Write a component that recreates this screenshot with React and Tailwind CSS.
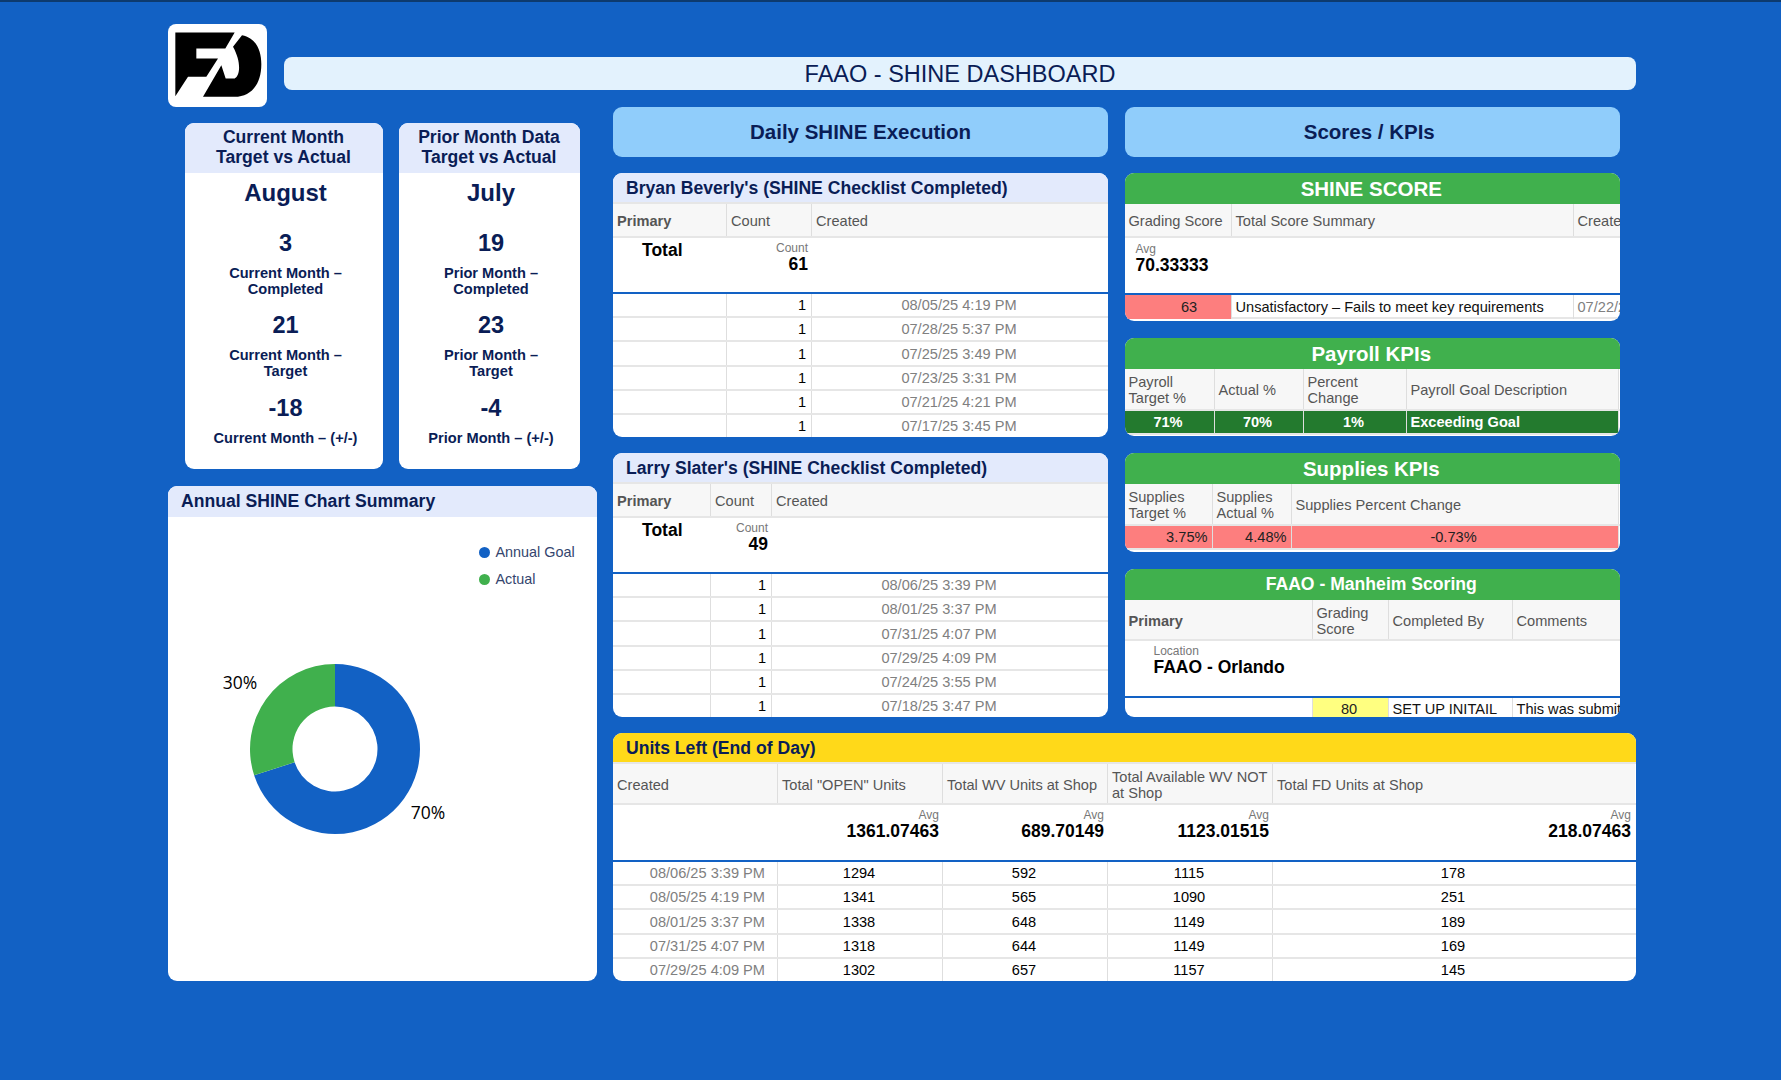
const bryanRows = ['08/05/25 4:19 PM', '07/28/25 5:37 PM', '07/25/25 3:49 PM', '07/23/25 3:31 PM', '07/21/25 4:21 PM', '07/17/25 3:45 PM'];
const larryRows = ['08/06/25 3:39 PM', '08/01/25 3:37 PM', '07/31/25 4:07 PM', '07/29/25 4:09 PM', '07/24/25 3:55 PM', '07/18/25 3:47 PM'];
const unitRows = [
  ['08/06/25 3:39 PM', 1294, 592, 1115, 178],
  ['08/05/25 4:19 PM', 1341, 565, 1090, 251],
  ['08/01/25 3:37 PM', 1338, 648, 1149, 189],
  ['07/31/25 4:07 PM', 1318, 644, 1149, 169],
  ['07/29/25 4:09 PM', 1302, 657, 1157, 145],
];
const unitAvgs = ['1361.07463', '689.70149', '1123.01515', '218.07463'];

function HeadCell({ children, bold, last }) {
  return (
    <div className={`flex items-center overflow-hidden bg-[#f7f7f7] pl-[4px] pr-[2px] pt-[2px] leading-[16px] text-[#555555] ${bold ? 'font-bold' : ''} ${last ? '' : 'border-r border-[#dedede]'}`}>
      <span>{children}</span>
    </div>
  );
}

function Cell({ children, className = '', last }) {
  return (
    <div className={`flex h-full items-center overflow-hidden whitespace-nowrap pl-[4px] pt-[2px] ${last ? '' : 'border-r border-[#dedede]'} ${className}`}>
      {children}
    </div>
  );
}

function Summary({ label, value, right, className = '' }) {
  return (
    <div className={`flex flex-col pt-[4px] ${right ? 'items-end pr-[4px]' : ''} ${className}`}>
      <span className="text-[12px] leading-[12px] text-[#777777]">{label}</span>
      <span className="text-[17.5px] font-bold leading-[20px] text-black">{value}</span>
    </div>
  );
}

function Checklist({ title, cols, total, rows }) {
  return (
    <section className="h-[264px] shrink-0 overflow-hidden rounded-[9px] bg-white">
      <h3 className="h-[31px] border-b-2 border-[#e6e6e6] bg-[#e3eafc] pl-[13px] text-[17.6px] font-bold leading-[30px] text-[#0a1d56]">{title}</h3>
      <div className={`grid h-[34px] border-b-2 border-[#e6e6e6] ${cols}`}>
        <HeadCell bold>Primary</HeadCell>
        <HeadCell>Count</HeadCell>
        <HeadCell last>Created</HeadCell>
      </div>
      <div className={`grid h-[56px] border-b-2 border-[#1261c4] ${cols}`}>
        <div className="pl-[29px] text-[17.5px] font-bold leading-[24px] text-black">Total</div>
        <Summary right label="Count" value={total} />
      </div>
      {rows.map((date) => (
        <div key={date} className={`grid h-[24.2px] border-b-2 border-[#e6e6e6] ${cols}`}>
          <Cell />
          <Cell className="justify-end pr-[5px] text-black">1</Cell>
          <Cell last className="justify-center pr-[6px] text-[#808080]">{date}</Cell>
        </div>
      ))}
    </section>
  );
}

function GreenTitle({ children, size }) {
  return (
    <h3 className={`h-[31px] bg-[#40b04d] pr-[2px] text-center font-bold leading-[31px] text-white ${size}`}>{children}</h3>
  );
}

function ShineScore() {
  const cols = 'grid-cols-[107px_342px_100px]';
  return (
    <section className="h-[148px] shrink-0 overflow-hidden rounded-[9px] bg-white">
      <GreenTitle size="text-[20.5px]">SHINE SCORE</GreenTitle>
      <div className={`grid h-[34px] border-b-2 border-[#e6e6e6] ${cols}`}>
        <HeadCell>Grading Score</HeadCell>
        <HeadCell>Total Score Summary</HeadCell>
        <HeadCell last>Created</HeadCell>
      </div>
      <div className="h-[57px] border-b-2 border-[#1261c4] pl-[11px] pt-[1px]">
        <Summary label="Avg" value="70.33333" />
      </div>
      <div className={`grid h-[24px] border-b-2 border-[#e6e6e6] ${cols}`}>
        <div className="flex h-full items-center justify-center border-r border-[#dedede] bg-[#fd7e7e] pl-[23px] pt-[2px] text-[#222222]">63</div>
        <Cell className="text-[#111111]">Unsatisfactory – Fails to meet key requirements</Cell>
        <Cell last className="text-[#808080]">07/22/25 3:12 PM</Cell>
      </div>
    </section>
  );
}

function PayrollKpis() {
  const cols = 'grid-cols-[90px_89px_103px_212px]';
  return (
    <section className="h-[98px] shrink-0 overflow-hidden rounded-[9px] bg-white">
      <GreenTitle size="text-[20.5px]">Payroll KPIs</GreenTitle>
      <div className={`grid h-[42px] border-b-2 border-[#e6e6e6] ${cols}`}>
        <HeadCell>Payroll Target %</HeadCell>
        <HeadCell>Actual %</HeadCell>
        <HeadCell>Percent Change</HeadCell>
        <HeadCell>Payroll Goal Description</HeadCell>
      </div>
      <div className={`grid h-[24px] border-b-2 border-[#e6e6e6] font-bold text-white ${cols}`}>
        <Cell className="justify-center bg-[#237a2e] pr-[6px]">71%</Cell>
        <Cell className="justify-center bg-[#237a2e] pr-[6px]">70%</Cell>
        <Cell className="justify-center bg-[#237a2e] pr-[6px]">1%</Cell>
        <Cell className="bg-[#237a2e]">Exceeding Goal</Cell>
      </div>
    </section>
  );
}

function SuppliesKpis() {
  const cols = 'grid-cols-[88px_79px_327px]';
  return (
    <section className="h-[99px] shrink-0 overflow-hidden rounded-[9px] bg-white">
      <GreenTitle size="text-[20.5px]">Supplies KPIs</GreenTitle>
      <div className={`grid h-[42px] border-b-2 border-[#e6e6e6] ${cols}`}>
        <HeadCell>Supplies Target %</HeadCell>
        <HeadCell>Supplies Actual %</HeadCell>
        <HeadCell>Supplies Percent Change</HeadCell>
      </div>
      <div className={`grid h-[24px] border-b-2 border-[#e6e6e6] text-[#222222] ${cols}`}>
        <Cell className="justify-end bg-[#fd7e7e] pr-[4px]">3.75%</Cell>
        <Cell className="justify-end bg-[#fd7e7e] pr-[4px]">4.48%</Cell>
        <Cell className="justify-center bg-[#fd7e7e] pr-[6px]">-0.73%</Cell>
      </div>
    </section>
  );
}

function ManheimScoring() {
  const cols = 'grid-cols-[188px_76px_124px_200px]';
  return (
    <section className="h-[148px] shrink-0 overflow-hidden rounded-[9px] bg-white">
      <GreenTitle size="text-[17.6px]">FAAO - Manheim Scoring</GreenTitle>
      <div className={`grid h-[41px] border-b-2 border-[#e6e6e6] ${cols}`}>
        <HeadCell bold>Primary</HeadCell>
        <HeadCell>Grading Score</HeadCell>
        <HeadCell>Completed By</HeadCell>
        <HeadCell last>Comments</HeadCell>
      </div>
      <div className="h-[57px] border-b-2 border-[#1261c4] pl-[29px]">
        <Summary label="Location" value="FAAO - Orlando" />
      </div>
      <div className={`grid h-[22px] ${cols}`}>
        <Cell />
        <Cell className="justify-center bg-[#ffff80] pr-[6px] text-[#222222]">80</Cell>
        <Cell className="text-[#111111]">SET UP INITAIL</Cell>
        <Cell last className="text-[#111111]">This was submitted during setup</Cell>
      </div>
    </section>
  );
}

function UnitsLeft() {
  const cols = 'grid-cols-[165px_165px_165px_165px_362px]';
  return (
    <section className="h-[248px] overflow-hidden rounded-[9px] bg-white">
      <h3 className="h-[31px] border-b-2 border-[#e6e6e6] bg-[#ffd919] pl-[13px] text-[17.6px] font-bold leading-[30px] text-[#0a1d56]">Units Left (End of Day)</h3>
      <div className={`grid h-[41px] border-b-2 border-[#e6e6e6] ${cols}`}>
        <HeadCell>Created</HeadCell>
        <HeadCell>Total "OPEN" Units</HeadCell>
        <HeadCell>Total WV Units at Shop</HeadCell>
        <HeadCell>Total Available WV NOT at Shop</HeadCell>
        <HeadCell last>Total FD Units at Shop</HeadCell>
      </div>
      <div className={`grid h-[57px] border-b-2 border-[#1261c4] ${cols}`}>
        <div />
        {unitAvgs.map((avg) => (
          <Summary key={avg} right label="Avg" value={avg} />
        ))}
      </div>
      {unitRows.map((row) => (
        <div key={row[0]} className={`grid h-[24.2px] border-b-2 border-[#e6e6e6] ${cols}`}>
          <Cell className="justify-end pr-[12px] text-[#808080]">{row[0]}</Cell>
          <Cell className="justify-center pr-[6px] text-black">{row[1]}</Cell>
          <Cell className="justify-center pr-[6px] text-black">{row[2]}</Cell>
          <Cell className="justify-center pr-[6px] text-black">{row[3]}</Cell>
          <Cell last className="justify-center pr-[6px] text-black">{row[4]}</Cell>
        </div>
      ))}
    </section>
  );
}

function MonthCard({ title, month, stats, width }) {
  return (
    <section className={`h-[346px] shrink-0 overflow-hidden rounded-[9px] bg-white text-center text-[#0a1d56] ${width}`}>
      <h3 className="h-[50px] bg-[#e3eafc] pr-[1px] pt-[3.5px] text-[17.6px] font-bold leading-[20px]">
        {title[0]}
        <br />
        {title[1]}
      </h3>
      <div className="pl-[3px]">
        <p className="pt-[4px] text-[24px] font-bold leading-[32px]">{month}</p>
        {stats.map((stat) => (
          <div key={stat.value} className="h-[82.4px] pt-[20px]">
            <p className="text-[23.5px] font-bold leading-[28px]">{stat.value}</p>
            <p className="mt-[8px] whitespace-pre-line text-[14.6px] font-bold leading-[16px]">{stat.label}</p>
          </div>
        ))}
      </div>
    </section>
  );
}

function Donut() {
  return (
    <svg width="260" height="200" viewBox="0 0 260 200" className="ml-[47px] mt-[62px]">
      <path fill="#1261c4" d="M120 15 A85 85 0 1 1 39.16 126.27 L79.58 113.13 A42.5 42.5 0 1 0 120 57.5 Z" />
      <path fill="#40b04d" d="M39.16 126.27 A85 85 0 0 1 120 15 L120 57.5 A42.5 42.5 0 0 0 79.58 113.13 Z" />
      <text x="25" y="40" textAnchor="middle" fontSize="17.5" fill="#000000" fontFamily="Open Sans, sans-serif">30%</text>
      <text x="213" y="170" textAnchor="middle" fontSize="17.5" fill="#000000" fontFamily="Open Sans, sans-serif">70%</text>
    </svg>
  );
}

function ChartCard() {
  return (
    <section className="mt-[17px] h-[495px] overflow-hidden rounded-[9px] bg-white">
      <h3 className="h-[31px] bg-[#e3eafc] pl-[13px] text-[17.6px] font-bold leading-[30px] text-[#0a1d56]">Annual SHINE Chart Summary</h3>
      <div className="flex flex-col gap-[11px] pl-[311px] pt-[27px] text-[14.4px] leading-[16px] text-[#34456e]">
        <div className="flex items-center gap-[5.5px]">
          <span className="h-[11px] w-[11px] rounded-full bg-[#1261c4]" />
          Annual Goal
        </div>
        <div className="flex items-center gap-[5.5px]">
          <span className="h-[11px] w-[11px] rounded-full bg-[#40b04d]" />
          Actual
        </div>
      </div>
      <Donut />
    </section>
  );
}

function Logo() {
  return (
    <div className="h-[83px] w-[99px] shrink-0 rounded-[8px] bg-white">
      <svg viewBox="25 27 297 248" className="h-full w-full">
        <path fill="#000" d="M47 52 L225 52 L197 100 L110 100 L110 130 L175 130 L140 185 L85 185 L47 243 Z" />
        <path fill="#000" d="M247 60 C290 68 305 108 305 147 C305 210 272 245 225 245 L130 245 L185 150 L198 190 L225 190 C242 180 245 140 220 95 Z" />
      </svg>
    </div>
  );
}

function SectionHead({ children, className = '' }) {
  return (
    <div className={`flex h-[50px] shrink-0 items-center justify-center rounded-[9px] bg-[#90cdfb] pt-[1px] text-[20.5px] font-bold text-[#0a1d56] ${className}`}>{children}</div>
  );
}

export default function App() {
  return (
    <div className="h-[1080px] overflow-hidden border-t-2 border-[#0d3a6e] bg-[#1261c4] pl-[168px] pt-[22px] font-['Liberation_Sans',sans-serif] text-[14.6px]">
      <header className="flex h-[82px] w-[1468px] gap-[17px]">
        <Logo />
        <div className="mt-[33px] flex h-[33px] flex-1 items-center justify-center rounded-[8px] bg-[#e3f2fd] pt-[2px] text-[23.5px] text-[#0a1d56]">FAAO - SHINE DASHBOARD</div>
      </header>
      <div className="flex w-[1468px] gap-[16px]">
        <aside className="w-[429px] shrink-0 pt-[17px]">
          <div className="flex gap-[16px] pl-[17px]">
            <MonthCard
              width="w-[198px]"
              title={['Current Month', 'Target vs Actual']}
              month="August"
              stats={[
                { value: 3, label: 'Current Month –\nCompleted' },
                { value: 21, label: 'Current Month –\nTarget' },
                { value: -18, label: 'Current Month – (+/-)' },
              ]}
            />
            <MonthCard
              width="w-[181px]"
              title={['Prior Month Data', 'Target vs Actual']}
              month="July"
              stats={[
                { value: 19, label: 'Prior Month –\nCompleted' },
                { value: 23, label: 'Prior Month –\nTarget' },
                { value: -4, label: 'Prior Month – (+/-)' },
              ]}
            />
          </div>
          <ChartCard />
        </aside>
        <main className="flex min-w-0 flex-1 flex-col gap-[16px] pt-[1px]">
          <div className="grid grid-cols-[495px_495.5px] gap-[16.5px]">
            <div className="flex flex-col gap-[16px]">
              <SectionHead>Daily SHINE Execution</SectionHead>
              <Checklist title="Bryan Beverly's (SHINE Checklist Completed)" cols="grid-cols-[114px_85px_296px]" total={61} rows={bryanRows} />
              <Checklist title="Larry Slater's (SHINE Checklist Completed)" cols="grid-cols-[98px_61px_336px]" total={49} rows={larryRows} />
            </div>
            <div className="flex flex-col gap-[16px]">
              <SectionHead className="pr-[6px]">Scores / KPIs</SectionHead>
              <div className="flex flex-col gap-[17px]">
                <ShineScore />
                <PayrollKpis />
                <SuppliesKpis />
                <ManheimScoring />
              </div>
            </div>
          </div>
          <UnitsLeft />
        </main>
      </div>
    </div>
  );
}
